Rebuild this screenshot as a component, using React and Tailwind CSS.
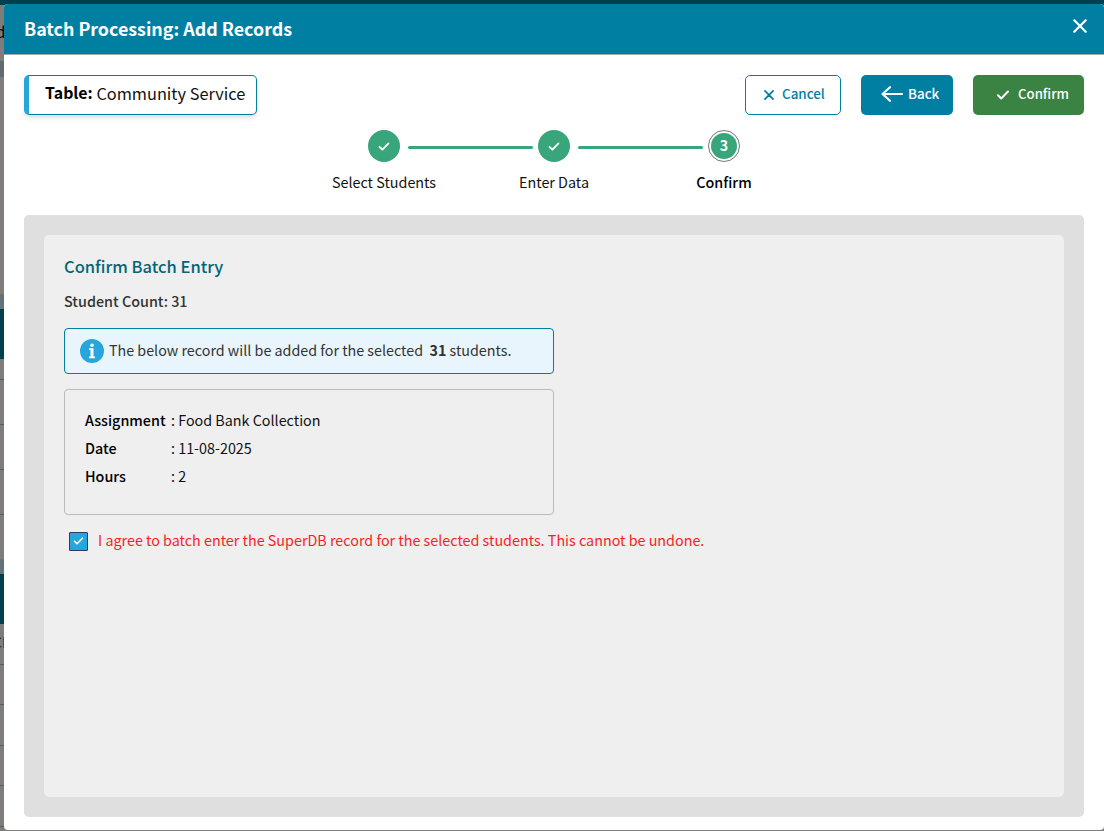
const steps = [
  { label: "Select Students", done: true },
  { label: "Enter Data", done: true },
  { label: "Confirm", done: false },
];

const record = [
  { name: "Assignment", value: "Food Bank Collection" },
  { name: "Date", value: "11-08-2025" },
  { name: "Hours", value: "2" },
];

function CheckIcon({ className }) {
  return (
    <svg className={className} viewBox="0 0 12 10" fill="none" stroke="currentColor" strokeWidth="2" strokeLinecap="round" strokeLinejoin="round">
      <path d="M1 5.3L4.2 8.5L11 1.5" />
    </svg>
  );
}

function CrossIcon({ className, width }) {
  return (
    <svg className={className} viewBox="0 0 14 14" fill="none" stroke="currentColor" strokeWidth={width} strokeLinecap="round">
      <path d="M1.3 1.3L12.7 12.7M12.7 1.3L1.3 12.7" />
    </svg>
  );
}

function Rows({ count, className }) {
  return Array.from({ length: count }, (_, i) => <div key={i} className={className} />);
}

// Dimmed page that stays behind the dialog
function PageBehind() {
  return (
    <div className="absolute inset-0 flex flex-col overflow-hidden bg-[#7f7d7b]">
      <div className="h-[5px] shrink-0 bg-[#003f50]" />
      <div className="h-14 shrink-0 pt-[17px]">
        <div className="-ml-1 text-[15px] leading-[20px] text-black">d</div>
      </div>
      <div className="h-4 shrink-0 bg-[#606b70]" />
      <div className="h-[217px] shrink-0" />
      <div className="h-[15px] shrink-0 bg-[#66727a]" />
      <div className="h-[50px] shrink-0 bg-[#003f50]" />
      <div className="h-[21px] shrink-0 border-b border-[#5c5c5c]" />
      <Rows count={3} className="h-[45px] shrink-0 border-b border-[#5c5c5c]" />
      <div className="h-11 shrink-0" />
      <div className="h-[15px] shrink-0 bg-[#66727a]" />
      <div className="h-[50px] shrink-0 bg-[#003f50]" />
      <div className="h-[41px] shrink-0 border-b border-[#5c5c5c] pt-2">
        <div className="-ml-[7px] text-[14px] leading-[20px] text-[#1d2c4c]">CI</div>
      </div>
      <Rows count={4} className="h-[40.4px] shrink-0 border-b border-[#5c5c5c]" />
    </div>
  );
}

function Stepper() {
  return (
    <div className="mt-[15px] flex justify-center">
      {steps.map((step, i) => (
        <div key={step.label} className="flex w-[170px] flex-col items-center">
          <div className="flex w-full items-center">
            <div className={i > 0 ? "mt-0.5 h-[3px] w-16 rounded-r-full bg-[#38a57a]" : "w-16"} />
            {step.done ? (
              <div className="mr-2 ml-[5px] flex size-8 items-center justify-center rounded-full bg-[#38a57a] text-white">
                <CheckIcon className="h-[9px] w-3" />
              </div>
            ) : (
              <div className="mr-2 ml-[5px] flex size-8 items-center justify-center rounded-full border border-[#777] bg-white">
                <div className="flex size-[26px] items-center justify-center rounded-full bg-[#38a57a] pb-px text-[14.3px] leading-none font-bold text-white">
                  {i + 1}
                </div>
              </div>
            )}
            <div className={i < steps.length - 1 ? "mt-0.5 h-[3px] w-[61px] rounded-l-full bg-[#38a57a]" : "w-[61px]"} />
          </div>
          <div className={step.done ? "mt-[9px] text-[14.35px] leading-[22px]" : "mt-[9px] text-[14.35px] leading-[22px] font-medium text-black"}>
            {step.label}
          </div>
        </div>
      ))}
    </div>
  );
}

export default function App() {
  return (
    <div className="relative h-[831px] w-[1104px] overflow-hidden pt-1 pl-1 font-['Noto_Sans_CJK_SC','Source_Sans_3',sans-serif] text-[#111]">
      <PageBehind />
      <div className="relative flex h-[826px] flex-col rounded bg-white">
        <div className="flex h-[51px] items-start justify-between rounded-t border-b border-[#a9a9a9] bg-[#007fa3] pt-[11px] pr-[17px] pl-5 text-white">
          <h1 className="text-[17.85px] leading-[26px] font-bold">Batch Processing: Add Records</h1>
          <button className="mt-1">
            <CrossIcon className="size-[14px]" width={2.2} />
          </button>
        </div>

        <div className="flex items-center gap-5 px-5 pt-5">
          <div className="mr-auto flex h-10 w-[233px] items-center rounded-[5px] border border-l-[5px] border-[#007fa3] border-l-[#27a6db] pb-1 pl-4 text-[16.35px] leading-6 whitespace-pre shadow-md">
            <span className="text-[15.9px] font-bold text-black">Table: </span>Community Service
          </div>
          <button className="flex h-10 w-24 items-center rounded-[5px] border border-[#007fa3] pl-[18px] text-[13.4px] font-medium text-[#007fa3]">
            <CrossIcon className="mr-2 size-[10px]" width={2.4} />
            <span className="pb-[3px]">Cancel</span>
          </button>
          <button className="flex h-10 w-[92px] items-center rounded-[5px] bg-[#007fa3] pl-5 text-[13.4px] font-medium text-white">
            <svg className="mr-[5px] mb-0.5 h-4 w-[22px]" viewBox="0 0 22 16" fill="none" stroke="currentColor" strokeWidth="2.2" strokeLinecap="round" strokeLinejoin="round">
              <path d="M9 1.2L1.5 8L9 14.8M1.5 8H21" />
            </svg>
            <span className="pb-[3px]">Back</span>
          </button>
          <button className="flex h-10 w-[111px] items-center rounded-[5px] bg-[#3b8343] pl-6 text-[13.2px] font-medium text-white">
            <CheckIcon className="mr-[9px] h-[10px] w-3" />
            <span className="pb-[3px]">Confirm</span>
          </button>
        </div>

        <Stepper />

        <div className="mx-5 mt-[22px] h-[602px] rounded-[5px] bg-[#dfdfdf] p-5">
          <div className="h-[562px] rounded-[5px] bg-[#efefef] px-5 pt-[19px]">
            <h2 className="text-[16.5px] leading-6 font-medium text-[#056577]">Confirm Batch Entry</h2>
            <p className="mt-3 text-[14.35px] leading-[22px] font-medium text-[#333]">Student Count: 31</p>

            <div className="mt-4 flex h-[46px] w-[490px] items-center rounded border border-[#007fa3] bg-[#e9f5fc] pl-[15px] text-[14.3px] text-[#333]">
              <svg className="mr-[5px] size-6" viewBox="0 0 24 24">
                <circle cx="12" cy="12" r="12" fill="#27a6db" />
                <circle cx="12" cy="6.3" r="1.8" fill="#fff" />
                <path d="M9 9.3H13.5V17.5H15V19.2H9V17.5H10.5V11H9Z" fill="#fff" />
              </svg>
              <p className="pb-0.5 leading-6 whitespace-pre">
                {"The below record will be added for the selected  "}
                <b className="font-bold">31</b> students.
              </p>
            </div>

            <div className="mt-[15px] h-[126px] w-[490px] rounded border border-[#bbb] pt-4 pl-5 text-[14.33px] leading-7">
              {record.map((item) => (
                <div key={item.name} className="flex">
                  <span className="w-[86px] font-medium text-black">{item.name}</span>
                  <span>: {item.value}</span>
                </div>
              ))}
            </div>

            <label className="mt-[15px] flex items-center pl-[5px] text-[14.33px] leading-6 text-[#f81e1e]">
              <span className="mr-[10px] flex size-[19px] items-center justify-center rounded-[1px] border border-[#2c3e50] bg-[#27a6db] text-white">
                <CheckIcon className="h-2 w-[11px]" />
              </span>
              <span className="-mt-0.5">I agree to batch enter the SuperDB record for the selected students. This cannot be undone.</span>
            </label>
          </div>
        </div>
      </div>
    </div>
  );
}
